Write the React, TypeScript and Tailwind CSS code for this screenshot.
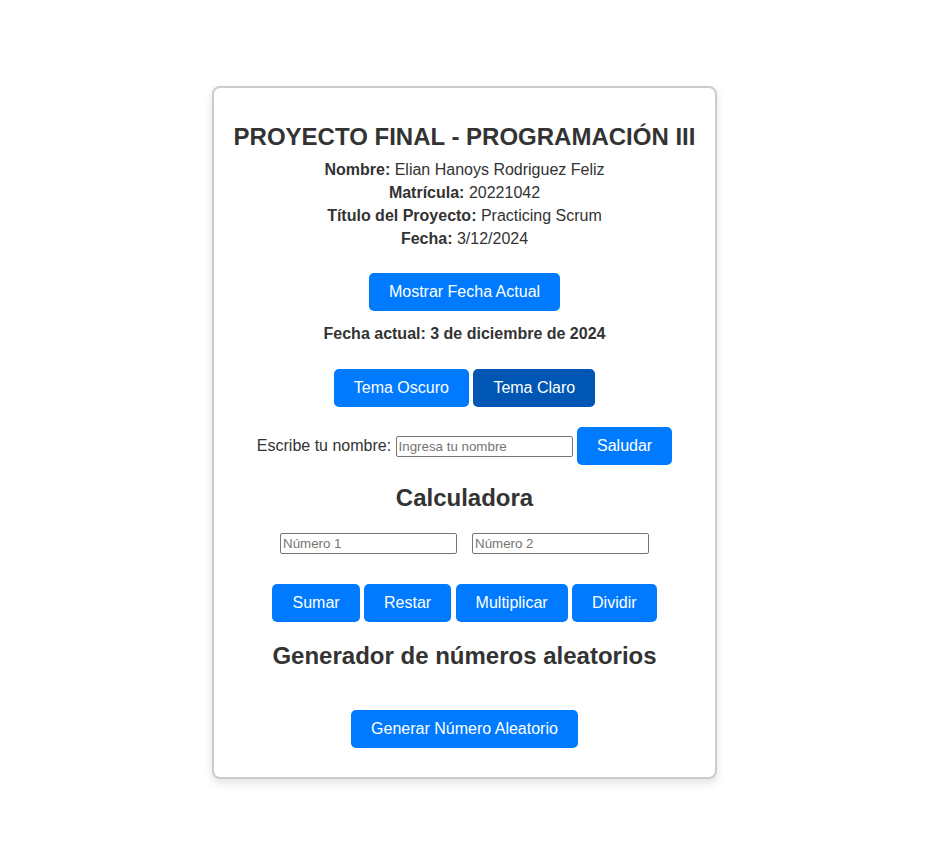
import { useState } from 'react';

const btn =
  'bg-[#007bff] text-white text-[16px] leading-[18px] px-5 py-[10px] rounded-[5px] cursor-pointer';

const inputCls =
  'w-[177px] h-[21px] border border-[#767676] rounded-[2px] px-[2px] text-[13.33px] placeholder:text-[#757575] outline-none';

export default function App() {
  const [fecha] = useState('3 de diciembre de 2024');

  return (
    <div
      className="min-h-[865px] bg-white text-[#333] flex justify-center"
      style={{ fontFamily: '"Liberation Sans", Arial, sans-serif' }}
    >
      <div className="mt-[86px] mb-[86px] w-[505px] h-fit border-2 border-[#ccc] rounded-[8px] shadow-[0_4px_8px_rgba(0,0,0,0.12)] flex flex-col items-center pb-[29px]">
        {/* Header */}
        <h1 className="mt-[35px] text-[24px] leading-[28px] font-bold">
          PROYECTO FINAL - PROGRAMACIÓN III
        </h1>
        <div className="mt-[7px] text-[16px] leading-[23px] text-center">
          <p>
            <b>Nombre:</b> Elian Hanoys Rodriguez Feliz
          </p>
          <p>
            <b>Matrícula:</b> 20221042
          </p>
          <p>
            <b>Título del Proyecto:</b> Practicing Scrum
          </p>
          <p>
            <b>Fecha:</b> 3/12/2024
          </p>
        </div>

        <button className={`${btn} mt-[23px]`}>Mostrar Fecha Actual</button>
        <p className="mt-[14px] text-[16px] leading-[18px] font-bold">
          Fecha actual: {fecha}
        </p>

        {/* Theme */}
        <div className="mt-[26px] flex gap-[4.45px]">
          <button className={btn}>Tema Oscuro</button>
          <button className={`${btn} bg-[#0056b3]`}>Tema Claro</button>
        </div>

        {/* Greeting */}
        <div className="mt-[20px] flex items-center gap-[4.45px] text-[16px]">
          <label>Escribe tu nombre:</label>
          <input className={inputCls} placeholder="Ingresa tu nombre" />
          <button className={btn}>Saludar</button>
        </div>

        {/* Calculator */}
        <h2 className="mt-[19px] text-[24px] leading-[28px] font-bold">Calculadora</h2>
        <div className="mt-[21px] flex gap-[15px]">
          <input type="number" className={inputCls} placeholder="Número 1" />
          <input type="number" className={inputCls} placeholder="Número 2" />
        </div>
        <div className="mt-[30px] flex gap-[4.45px]">
          <button className={btn}>Sumar</button>
          <button className={btn}>Restar</button>
          <button className={btn}>Multiplicar</button>
          <button className={btn}>Dividir</button>
        </div>

        {/* Random */}
        <h2 className="mt-[20px] text-[24px] leading-[28px] font-bold">
          Generador de números aleatorios
        </h2>
        <button className={`${btn} mt-[40px]`}>Generar Número Aleatorio</button>
      </div>
    </div>
  );
}
